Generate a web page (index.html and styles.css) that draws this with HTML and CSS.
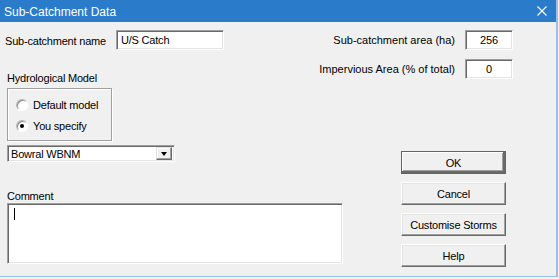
FILE: index.html
```html
<!DOCTYPE html>
<html lang="en">
<head>
  <meta charset="UTF-8" />
  <title>Sub-Catchment Data</title>
  <link rel="stylesheet" href="styles.css">
</head>
<body>
  <div class="window">
    <div class="titlebar">
      <span class="title">Sub-Catchment Data</span>
      <svg class="close" width="10" height="10" viewBox="0 0 10 10">
        <path d="M0.5 0.5L9.5 9.5M9.5 0.5L0.5 9.5" stroke="#fff" stroke-width="1.1" fill="none"/>
      </svg>
    </div>

    <div class="dialog">
      <div class="left">
        <div class="name-row">
          <label class="name-label">Sub-catchment name</label>
          <div class="field name-field">U/S Catch</div>
        </div>

        <div class="model-label">Hydrological Model</div>
        <div class="group">
          <div class="radio-row">
            <span class="radio"></span>
            <span>Default model</span>
          </div>
          <div class="radio-row">
            <span class="radio checked"></span>
            <span>You specify</span>
          </div>
        </div>

        <div class="combo">
          <span class="combo-text">Bowral WBNM</span>
          <span class="combo-btn"><span class="arrow"></span></span>
        </div>

        <div class="comment-label">Comment</div>
        <div class="field comment"><span class="caret"></span></div>
      </div>

      <div class="right">
        <div class="value-row">
          <span class="value-label">Sub-catchment area (ha)</span>
          <div class="field value-field">256</div>
        </div>
        <div class="value-row">
          <span class="value-label">Impervious Area (% of total)</span>
          <div class="field value-field">0</div>
        </div>

        <div class="buttons">
          <button class="btn default">OK</button>
          <button class="btn">Cancel</button>
          <button class="btn">Customise Storms</button>
          <button class="btn">Help</button>
        </div>
      </div>
    </div>
  </div>
</body>
</html>
```

FILE: styles.css
```css
body {
  margin: 0;
  background: #f4f4f4;
  font-family: 'Liberation Sans', Arial, sans-serif;
  font-size: 11px;
  letter-spacing: -0.2px;
  color: #000;
}

.window {
  width: 556px;
  height: 276px;
  background: #f0f0f0;
  border-right: 2px solid #98c1ea;
  border-bottom: 1px solid #98c1ea;
  display: flex;
  flex-direction: column;
}

.titlebar {
  height: 22px;
  background: #2b7bcb;
  display: flex;
  align-items: center;
  justify-content: space-between;
  padding: 0 9px 0 4px;
}

.title {
  color: #fff;
  font-size: 12px;
  letter-spacing: 0;
  margin-top: 1px;
}

.close {
  margin-top: -1px;
}

.dialog {
  display: flex;
  padding: 8px 43px 0 5px;
  white-space: nowrap;
}

/* sunken edit box */
.field {
  background: #fff;
  border: 1px solid;
  border-color: #a0a0a0 #fff #fff #a0a0a0;
  box-shadow: inset 1px 1px #696969, inset -1px -1px #e3e3e3;
  box-sizing: border-box;
  height: 20px;
  line-height: 18px;
}

.left {
  flex: 1;
  min-width: 0;
  display: flex;
  flex-direction: column;
}

.name-row {
  display: flex;
  align-items: center;
}

.name-label {
  width: 111px;
  margin-top: 1px;
}

.name-field {
  width: 108px;
  padding-left: 4px;
}

.model-label {
  margin: 22px 0 0 2px;
  line-height: 13px;
  height: 13px;
}

.group {
  margin: 3px 0 0 2px;
  width: 105px;
  height: 53px;
  box-sizing: border-box;
  border: 1px solid #a0a0a0;
  box-shadow: inset 1px 1px #fff, 1px 1px #fff;
  padding: 10px 0 0 8px;
  display: flex;
  flex-direction: column;
  gap: 9px;
}

.radio-row {
  display: flex;
  align-items: center;
  gap: 5px;
  height: 12px;
}

.radio {
  width: 12px;
  height: 12px;
  box-sizing: border-box;
  border-radius: 50%;
  background: #fff;
  border: 1px solid;
  border-color: #b4b4b4 #fff #fff #b4b4b4;
  box-shadow: inset 1px 1px #8a8a8a;
  display: flex;
  align-items: center;
  justify-content: center;
}

.radio.checked::after {
  content: '';
  width: 4px;
  height: 4px;
  border-radius: 50%;
  background: #000;
}

.combo {
  margin: 4px 0 0 2px;
  width: 168px;
  height: 17px;
  box-sizing: border-box;
  background: #fff;
  border: 1px solid;
  border-color: #a0a0a0 #fff #fff #a0a0a0;
  box-shadow: inset 1px 1px #696969, inset -1px -1px #e3e3e3;
  display: flex;
  align-items: center;
  justify-content: space-between;
  padding: 1px 2px 1px 2px;
}

.combo-text {
  margin-left: 1px;
}

.combo-btn {
  width: 16px;
  height: 13px;
  box-sizing: border-box;
  background: #f0f0f0;
  border: 1px solid;
  border-color: #e3e3e3 #696969 #696969 #e3e3e3;
  box-shadow: inset -1px -1px #a0a0a0, inset 1px 1px #fff;
  display: flex;
  align-items: center;
  justify-content: center;
}

.arrow {
  width: 0;
  height: 0;
  border-left: 3.5px solid transparent;
  border-right: 3.5px solid transparent;
  border-top: 4px solid #000;
}

.comment-label {
  margin: 28px 0 0 2px;
  line-height: 13px;
  height: 13px;
}

.comment {
  margin: 0 0 0 2px;
  width: 336px;
  flex-shrink: 0;
  height: 61px;
  padding: 4px 0 0 6px;
}

.caret {
  display: block;
  width: 1px;
  height: 12px;
  background: #000;
}

.right {
  flex-shrink: 0;
  display: flex;
  flex-direction: column;
  align-items: flex-end;
}

.value-row {
  display: flex;
  align-items: center;
  gap: 10px;
  margin-bottom: 9px;
}

.value-label {
  letter-spacing: 0;
}

.value-field {
  width: 48px;
  text-align: center;
}

.buttons {
  display: flex;
  flex-direction: column;
  gap: 8px;
  margin: 63px 7px 0 0;
}

.btn {
  width: 105px;
  height: 23px;
  margin: 0;
  padding: 0;
  font-family: inherit;
  font-size: 11px;
  letter-spacing: -0.2px;
  color: #000;
  background: #f0f0f0;
  border: 1px solid;
  border-color: #fff #696969 #696969 #fff;
  box-shadow: inset -1px -1px #a0a0a0, inset 1px 1px #e3e3e3;
}

.btn.default {
  border-color: #646464;
  box-shadow: inset -2px -2px #696969, inset 1px 1px #fff, inset -3px -3px #a0a0a0;
}
```
